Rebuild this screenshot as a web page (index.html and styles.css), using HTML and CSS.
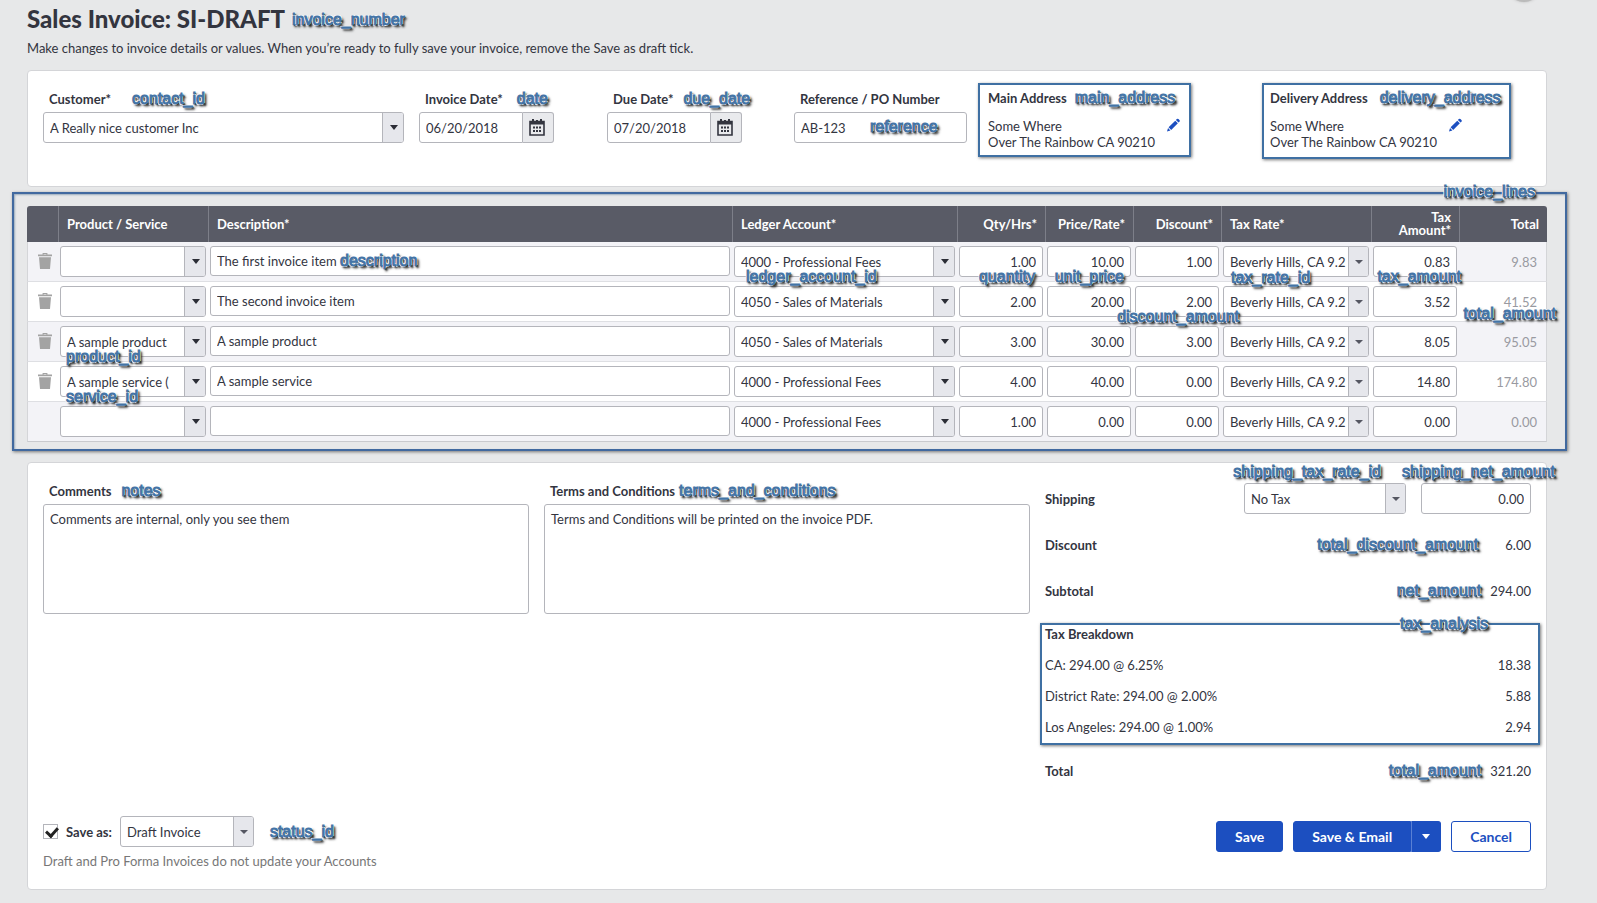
FILE: index.html
```html
<!DOCTYPE html>
<html lang="en">
<head>
<meta charset="utf-8">
<title>Sales Invoice: SI-DRAFT</title>
<link rel="stylesheet" href="styles.css">
</head>
<body>
<svg class="sprite" aria-hidden="true">
  <symbol id="trash" viewBox="0 0 14 16"><path d="M4.6 0h4.8v1.6H14v1.6H0V1.6h4.6zM5.6.9v.7h2.8V.9zM1 4.2h12L12 16H2z" fill-rule="evenodd"/></symbol>
  <symbol id="calendar" viewBox="0 0 16 17"><path d="M1 2.5h14V16H1z" fill="none" stroke="currentColor" stroke-width="1.6"/><path d="M1 2.5h14v3H1zM3 0h2v4H3zM11 0h2v4h-2zM7 1h2v2H7zM4 7.5h2v2H4zM7 7.5h2v2H7zM10 7.5h2v2h-2zM4 11h2v2H4zM7 11h2v2H7zM10 11h2v2h-2z"/></symbol>
  <symbol id="pencil" viewBox="0 0 14 14"><path d="M10.6.6a1.2 1.2 0 0 1 1.7 0l1.1 1.1a1.2 1.2 0 0 1 0 1.7l-1 1-2.8-2.8zM8.9 2.3l2.8 2.8-7.2 7.2-2.8-2.8zM1.1 10.3l2.6 2.6L0 14z"/></symbol>
</svg>
<div class="bubble"></div>
<main class="page">
  <header class="page-head">
    <h1>Sales Invoice: SI-DRAFT <span class="note">invoice_number</span></h1>
    <p>Make changes to invoice details or values. When you’re ready to fully save your invoice, remove the Save as draft tick.</p>
  </header>

  <section class="card details">
    <div class="field">
      <div class="label-row gap-l"><label for="customer">Customer*</label><span class="note">contact_id</span></div>
      <span class="select customer"><select id="customer"><option>A Really nice customer Inc</option></select></span>
    </div>
    <div class="field">
      <div class="label-row gap-m"><label for="date">Invoice Date*</label><span class="note">date</span></div>
      <div class="date"><input id="date" type="text" value="06/20/2018"><button type="button" aria-label="Pick invoice date"><svg><use href="#calendar"/></svg></button></div>
    </div>
    <div class="field">
      <div class="label-row gap-s"><label for="due">Due Date*</label><span class="note">due_date</span></div>
      <div class="date"><input id="due" type="text" value="07/20/2018"><button type="button" aria-label="Pick due date"><svg><use href="#calendar"/></svg></button></div>
    </div>
    <div class="field">
      <div class="label-row"><label for="ref">Reference / PO Number</label></div>
      <div class="anchor reference"><input id="ref" type="text" value="AB-123"><span class="note at-reference">reference</span></div>
    </div>
    <div class="address main">
      <div class="address-head"><strong>Main Address</strong><span class="note">main_address</span></div>
      <div class="address-body"><address>Some Where<br>Over The Rainbow CA 90210</address><button type="button" aria-label="Edit main address"><svg><use href="#pencil"/></svg></button></div>
    </div>
    <div class="address delivery">
      <div class="address-head"><strong>Delivery Address</strong><span class="note">delivery_address</span></div>
      <div class="address-body"><address>Some Where<br>Over The Rainbow CA 90210</address><button type="button" aria-label="Edit delivery address"><svg><use href="#pencil"/></svg></button></div>
    </div>
  </section>

  <section class="lines">
    <table>
      <colgroup><col class="c-del"><col class="c-prod"><col><col class="c-ledger"><col class="c-num"><col class="c-num"><col class="c-num"><col class="c-prod"><col class="c-num"><col class="c-num"></colgroup>
      <thead>
        <tr><th></th><th>Product / Service</th><th>Description*</th><th>Ledger Account*</th><th class="num">Qty/Hrs*</th><th class="num">Price/Rate*</th><th class="num">Discount*</th><th>Tax Rate*</th><th class="num">Tax Amount*</th><th class="num">Total</th></tr>
      </thead>
      <tbody>
        <tr>
          <td><button type="button" class="trash" aria-label="Delete line 1"><svg><use href="#trash"/></svg></button></td>
          <td><span class="select"><select aria-label="Product"><option></option></select></span></td>
          <td><input class="desc" type="text" aria-label="Description" value="The first invoice item"><span class="note at-description">description</span></td>
          <td><span class="select"><select aria-label="Ledger account"><option>4000 - Professional Fees</option></select></span><span class="note at-ledger">ledger_account_id</span></td>
          <td><input class="num" type="text" aria-label="Quantity" value="1.00"><span class="note at-quantity">quantity</span></td>
          <td><input class="num" type="text" aria-label="Price" value="10.00"><span class="note at-price">unit_price</span></td>
          <td><input class="num" type="text" aria-label="Discount" value="1.00"></td>
          <td><span class="select soft"><select aria-label="Tax rate"><option>Beverly Hills, CA 9.2</option></select></span><span class="note at-rate">tax_rate_id</span></td>
          <td><input class="num" type="text" aria-label="Tax amount" value="0.83"><span class="note at-tax">tax_amount</span></td>
          <td class="total">9.83</td>
        </tr>
        <tr>
          <td><button type="button" class="trash" aria-label="Delete line 2"><svg><use href="#trash"/></svg></button></td>
          <td><span class="select"><select aria-label="Product"><option></option></select></span></td>
          <td><input class="desc" type="text" aria-label="Description" value="The second invoice item"></td>
          <td><span class="select"><select aria-label="Ledger account"><option>4050 - Sales of Materials</option></select></span></td>
          <td><input class="num" type="text" aria-label="Quantity" value="2.00"></td>
          <td><input class="num" type="text" aria-label="Price" value="20.00"></td>
          <td><input class="num" type="text" aria-label="Discount" value="2.00"><span class="note at-discount">discount_amount</span></td>
          <td><span class="select soft"><select aria-label="Tax rate"><option>Beverly Hills, CA 9.2</option></select></span></td>
          <td><input class="num" type="text" aria-label="Tax amount" value="3.52"></td>
          <td class="total">41.52<span class="note at-total">total_amount</span></td>
        </tr>
        <tr>
          <td><button type="button" class="trash" aria-label="Delete line 3"><svg><use href="#trash"/></svg></button></td>
          <td><span class="select"><select aria-label="Product"><option>A sample product</option></select></span><span class="note at-product">product_id</span></td>
          <td><input class="desc" type="text" aria-label="Description" value="A sample product"></td>
          <td><span class="select"><select aria-label="Ledger account"><option>4050 - Sales of Materials</option></select></span></td>
          <td><input class="num" type="text" aria-label="Quantity" value="3.00"></td>
          <td><input class="num" type="text" aria-label="Price" value="30.00"></td>
          <td><input class="num" type="text" aria-label="Discount" value="3.00"></td>
          <td><span class="select soft"><select aria-label="Tax rate"><option>Beverly Hills, CA 9.2</option></select></span></td>
          <td><input class="num" type="text" aria-label="Tax amount" value="8.05"></td>
          <td class="total">95.05</td>
        </tr>
        <tr>
          <td><button type="button" class="trash" aria-label="Delete line 4"><svg><use href="#trash"/></svg></button></td>
          <td><span class="select"><select aria-label="Service"><option>A sample service (</option></select></span><span class="note at-product">service_id</span></td>
          <td><input class="desc" type="text" aria-label="Description" value="A sample service"></td>
          <td><span class="select"><select aria-label="Ledger account"><option>4000 - Professional Fees</option></select></span></td>
          <td><input class="num" type="text" aria-label="Quantity" value="4.00"></td>
          <td><input class="num" type="text" aria-label="Price" value="40.00"></td>
          <td><input class="num" type="text" aria-label="Discount" value="0.00"></td>
          <td><span class="select soft"><select aria-label="Tax rate"><option>Beverly Hills, CA 9.2</option></select></span></td>
          <td><input class="num" type="text" aria-label="Tax amount" value="14.80"></td>
          <td class="total">174.80</td>
        </tr>
        <tr>
          <td></td>
          <td><span class="select"><select aria-label="Product"><option></option></select></span></td>
          <td><input class="desc" type="text" aria-label="Description" value=""></td>
          <td><span class="select"><select aria-label="Ledger account"><option>4000 - Professional Fees</option></select></span></td>
          <td><input class="num" type="text" aria-label="Quantity" value="1.00"></td>
          <td><input class="num" type="text" aria-label="Price" value="0.00"></td>
          <td><input class="num" type="text" aria-label="Discount" value="0.00"></td>
          <td><span class="select soft"><select aria-label="Tax rate"><option>Beverly Hills, CA 9.2</option></select></span></td>
          <td><input class="num" type="text" aria-label="Tax amount" value="0.00"></td>
          <td class="total">0.00</td>
        </tr>
      </tbody>
    </table>
    <div class="frame"><span class="note at-lines">invoice_lines</span></div>
  </section>

  <section class="card summary">
    <div class="columns">
      <div class="text-block">
        <div class="label-row gap-s"><label for="comments">Comments</label><span class="note">notes</span></div>
        <textarea id="comments">Comments are internal, only you see them</textarea>
      </div>
      <div class="text-block">
        <div class="label-row gap-xs"><label for="terms">Terms and Conditions</label><span class="note">terms_and_conditions</span></div>
        <textarea id="terms">Terms and Conditions will be printed on the invoice PDF.</textarea>
      </div>
      <div class="totals">
        <div class="row shipping">
          <label for="ship-tax">Shipping</label>
          <span class="select soft ship-tax"><select id="ship-tax"><option>No Tax</option></select><span class="note at-ship-tax">shipping_tax_rate_id</span></span>
          <span class="anchor ship-net"><input class="num" type="text" aria-label="Shipping net amount" value="0.00"><span class="note at-ship-net">shipping_net_amount</span></span>
        </div>
        <div class="row wide"><strong>Discount</strong><span class="note">total_discount_amount</span><span>6.00</span></div>
        <div class="row"><strong>Subtotal</strong><span class="note">net_amount</span><span>294.00</span></div>
        <div class="breakdown">
          <span class="note at-analysis">tax_analysis</span>
          <strong>Tax Breakdown</strong>
          <div class="tax"><span>CA: 294.00 @ 6.25%</span><span>18.38</span></div>
          <div class="tax"><span>District Rate: 294.00 @ 2.00%</span><span>5.88</span></div>
          <div class="tax"><span>Los Angeles: 294.00 @ 1.00%</span><span>2.94</span></div>
        </div>
        <div class="row"><strong>Total</strong><span class="note">total_amount</span><span>321.20</span></div>
      </div>
    </div>
    <footer class="actions">
      <div>
        <div class="save-as">
          <input id="draft" type="checkbox" checked><label for="draft">Save as:</label>
          <span class="select soft status"><select aria-label="Status"><option>Draft Invoice</option></select></span>
          <span class="note">status_id</span>
        </div>
        <p>Draft and Pro Forma Invoices do not update your Accounts</p>
      </div>
      <div class="buttons">
        <button type="button" class="btn">Save</button>
        <div class="split"><button type="button" class="btn">Save &amp; Email</button><button type="button" class="btn more" aria-label="More save options"></button></div>
        <button type="button" class="btn plain">Cancel</button>
      </div>
    </footer>
  </section>
</main>
</body>
</html>
```
FILE: styles.css
```css
* { box-sizing: border-box; }

body {
  margin: 0;
  background: #e7e8e9;
  color: #33353f;
  font: 13px/18px Lato, "Liberation Sans", sans-serif;
  position: relative;
  overflow-x: hidden;
}

input, select, textarea, button { font: inherit; color: inherit; }
h1, p, address { margin: 0; font-style: normal; }
label, strong { font-weight: 700; }
.sprite { position: absolute; width: 0; height: 0; }

.bubble {
  position: absolute;
  top: -28px;
  right: 57px;
  width: 32px;
  height: 30px;
  border-radius: 50%;
  background: #bbb;
  box-shadow: 0 0 3px #bbb;
}

.page { padding: 5px 50px 13px 27px; }
.page-head { padding-bottom: 12px; }
h1 { font-size: 24px; line-height: 28px; font-weight: 900; }
.page-head p { margin-top: 5px; line-height: 20px; }

/* Field-name annotations */
.note {
  font: 400 16px/18px "Liberation Sans", Arial, sans-serif;
  color: #4474a6;
  -webkit-text-stroke: 1px #4474a6;
  white-space: nowrap;
  text-shadow: -1px -1px 0 #fff, 1px -1px 0 #fff, -1px 1px 0 #fff, 1px 1px 1px #222, 2px 2px 2px #222, 2px 2px 3px #444;
}
h1 .note { vertical-align: 3px; margin-left: 2px; }

.card { background: #fff; border: 1px solid #d4d5d8; border-radius: 4px; padding: 0 15px; }

/* Controls */
input[type="text"], select, textarea {
  display: block;
  width: 100%;
  height: 31px;
  margin: 0;
  padding: 0 6px;
  background: #fff;
  border: 1px solid #b4b5bb;
  border-radius: 3px;
  outline: 0;
}
input.num { text-align: right; }
select { appearance: none; padding-right: 20px; }
.select { display: block; position: relative; }
.select::before {
  content: "";
  position: absolute;
  top: 1px;
  right: 1px;
  bottom: 1px;
  width: 20px;
  background: #e6e7ec;
  border-left: 1px solid #b4b5bb;
  border-radius: 0 2px 2px 0;
  pointer-events: none;
}
.select::after, .more::after {
  content: "";
  position: absolute;
  top: 13px;
  right: 6px;
  border: 4px solid transparent;
  border-top: 5px solid #2b2d36;
  border-bottom: 0;
  pointer-events: none;
}
.soft::before { width: 19px; }
.soft::after { top: 14px; border-top: 4px solid #555762; }
.anchor { position: relative; display: block; }

/* Invoice details */
.details {
  display: grid;
  grid-template-columns: 376fr 188fr 187fr 184fr 284fr 269fr;
  align-items: start;
  min-height: 117px;
  padding-top: 12px;
}
.field { padding-top: 7px; }
.label-row { display: flex; align-items: center; height: 18px; padding-left: 6px; margin-bottom: 4px; }
.gap-l { gap: 21px; }
.gap-m { gap: 14px; }
.gap-s { gap: 10px; }
.gap-xs { gap: 4px; }
.customer { margin-right: 15px; }
.date { display: flex; width: 135px; }
.date input { border-radius: 3px 0 0 3px; flex: 1; min-width: 0; }
.date button {
  width: 31px;
  padding: 0 2px 0 0;
  background: #e9eaed;
  border: 1px solid #b4b5bb;
  border-left: 0;
  border-radius: 0 3px 3px 0;
  display: grid;
  place-items: center;
}
.date svg { width: 16px; height: 17px; fill: currentColor; }
.reference { margin-right: 11px; }
.address { border: 2px solid #3f70a3; box-shadow: 1px 1px 3px #777; padding: 4px 8px 5px; }
.main { width: 213px; }
.delivery { width: 249px; padding: 4px 6px 7px; }
.address-head { display: flex; gap: 12px; }
.main .address-head { gap: 8px; }
.address-body { display: flex; gap: 12px; align-items: start; margin-top: 11px; line-height: 16px; white-space: nowrap; }
.address-body button { border: 0; background: none; padding: 0; color: #1c4fc0; }
.address-body svg { display: block; width: 13px; height: 14px; fill: currentColor; }

/* Invoice lines */
.lines { position: relative; margin-top: 19px; }
table { width: 100%; table-layout: fixed; border-spacing: 0; }
.c-del { width: 31px; }
.c-prod { width: 150px; }
.c-ledger { width: 225px; }
.c-num { width: 88px; }
th {
  height: 36px;
  padding: 0 8px;
  background: #595b66;
  color: #fff;
  font-weight: 700;
  line-height: 13px;
  text-align: left;
  border-left: 1px solid #7d7f89;
}
th.num { text-align: right; }
th:first-child { border-left: 0; border-radius: 3px 0 0 0; }
th:last-child { border-radius: 0 3px 0 0; }
th:nth-child(9) { padding-left: 20px; }
td { position: relative; height: 40px; padding: 4px 2px; vertical-align: top; background: #fff; border-bottom: 1px solid #dedfe3; }
tr:nth-child(odd) td { background: #f3f3f7; }
tr:last-child td { border-bottom-color: #c9cace; }
td:first-child { border-left: 1px solid #d4d5d8; padding: 6px 0 0 10px; }
td:last-child { border-right: 1px solid #d4d5d8; }
td input.desc { height: 30px; }
td.total { padding: 11px 9px 0 0; text-align: right; color: #999aa1; }
.trash { display: block; border: 0; background: none; padding: 0; margin-top: 5px; color: #a3a3a3; }
.trash svg { display: block; width: 14px; height: 16px; fill: currentColor; }
.frame {
  position: absolute;
  top: -14px;
  right: -20px;
  bottom: -9px;
  left: -15px;
  border: 2px solid #41699f;
  box-shadow: 1px 1px 3px #777, inset 1px 1px 2px #9ab;
  pointer-events: none;
}

/* Annotations that lie over their controls */
[class*="at-"] { position: absolute; z-index: 2; pointer-events: none; }
.at-reference { left: 76px; top: 6px; }
.at-description { left: 132px; top: 10px; }
.at-ledger { left: 14px; top: 26px; }
.at-quantity { right: 10px; top: 26px; }
.at-price { right: 9px; top: 26px; }
.at-discount { right: -18px; top: 26px; }
.at-rate { left: 10px; top: 27px; }
.at-tax { right: -2px; top: 26px; }
.at-total { right: -10px; top: 23px; }
.at-product { left: 8px; top: 26px; }
.at-lines { right: 30px; top: -11px; }
.at-ship-tax { right: 25px; top: -20px; }
.at-ship-net { right: -24px; top: -20px; }
.at-analysis { right: 50px; top: -10px; }

/* Summary */
.summary { margin-top: 20px; }
.columns { display: grid; grid-template-columns: repeat(3, 1fr); gap: 15px; }
.text-block { padding-top: 19px; }
textarea { height: 110px; padding: 5px 6px; resize: none; }
.totals { padding-top: 20px; }
.row { display: flex; align-items: center; gap: 9px; height: 46px; }
.row strong, .row label { margin-right: auto; }
.wide { gap: 27px; }
.shipping { height: 31px; gap: 15px; margin-bottom: 8px; }
.ship-tax { width: 162px; }
.ship-net { width: 110px; }
.breakdown {
  position: relative;
  margin: 9px -9px 3px -5px;
  padding: 0 7px 7px 3px;
  border: 2px solid #3f70a3;
  box-shadow: 1px 1px 3px #777;
}
.tax { display: flex; justify-content: space-between; margin-top: 13px; }
.breakdown strong { display: block; }
.actions { display: flex; justify-content: space-between; padding: 22px 0 19px; }
.save-as { display: flex; align-items: center; }
.save-as label { margin: 0 8px; }
.save-as .note { margin-left: 16px; }
.status { width: 134px; }
.actions p { margin-top: 5px; color: #777; }
.save-as input {
  appearance: none;
  position: relative;
  width: 15px;
  height: 15px;
  margin: 0;
  background: #fff;
  border: 1px solid #b4b5bb;
}
.save-as input:checked::after {
  content: "";
  position: absolute;
  left: 4px;
  top: 0;
  width: 5px;
  height: 9px;
  border: solid #222;
  border-width: 0 3px 3px 0;
  transform: rotate(42deg);
}
.buttons { display: flex; align-items: flex-start; gap: 10px; padding-top: 5px; }
.btn {
  position: relative;
  height: 31px;
  padding: 0 18px;
  background: #1c4fc0;
  border: 1px solid #1c4fc0;
  border-radius: 3px;
  color: #fff;
  font-size: 14px;
  font-weight: 700;
}
.split { display: flex; }
.split .btn:first-child { border-radius: 3px 0 0 3px; }
.split .more { width: 30px; padding: 0; border-left-color: #5a80d4; border-radius: 0 3px 3px 0; }
.more::after { right: 10px; top: 12px; border-top-color: #fff; }
.plain { background: #fff; color: #1c4fc0; }
```
